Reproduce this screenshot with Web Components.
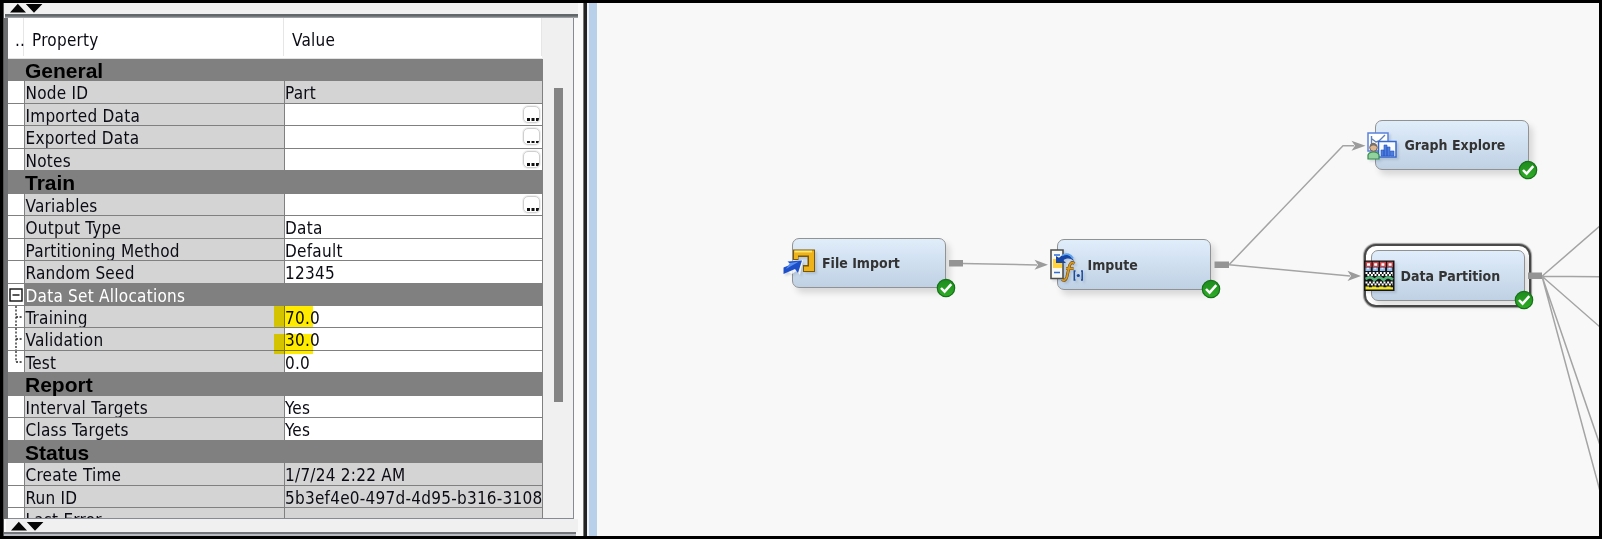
<!DOCTYPE html>
<html lang="en">
<head>
<meta charset="utf-8">
<title>Process flow</title>
<style>
html,body{margin:0;height:100%;overflow:hidden}
body{font-family:"DejaVu Sans Condensed","DejaVu Sans",sans-serif;font-stretch:condensed;font-size:17px;letter-spacing:.25px;color:#0b0b14}
</style>
</head>
<body>
<flow-app></flow-app>
<script>
const define = (name, html, setup) => customElements.define(name, class extends HTMLElement {
  connectedCallback() {
    if (this.shadowRoot) return;
    const root = this.attachShadow({mode: 'open'});
    root.innerHTML = typeof html === 'function' ? html(this) : html;
    if (setup) setup(this, root);
  }
});

define('split-bar', `<style>
:host{display:block;flex:none;background:#f0f0f0}
svg{display:block;margin-left:4px}
</style><svg width="60" height="11"><path d="M1 9.5 8.8.8 17 9.5ZM16.8 1H33.4L25 9.8Z" fill="#050505"/></svg>`);

define('prop-category', `<style>
:host{display:block;height:22.46px;box-sizing:border-box;background:#808080;overflow:hidden;padding-left:17px;color:#000;letter-spacing:0;
font:bold 21px/24px "Liberation Sans",Arial,sans-serif}
</style><slot></slot>`);

define('prop-row', el => {
  const tree = el.getAttribute('tree');
  const group = tree === 'group';
  let mark = '';
  if (group) mark = '<svg width="16" height="22"><rect x="2" y="5" width="12" height="12" fill="#fff" stroke="#111" stroke-width="1.4"/><path d="M4.5 11h7" stroke="#111" stroke-width="1.4"/></svg>';
  else if (tree) mark = `<svg width="16" height="22"><path d="M8 0V${tree === 'last' ? 11 : 22}M8 11h7" fill="none" stroke="#222" stroke-width="1.3" stroke-dasharray="2 1.6"/></svg>`;
  return `<style>
:host{display:grid;grid-template-columns:16px 260px 1fr;height:22.46px;box-sizing:border-box;border-bottom:1px solid #808080;line-height:24px;white-space:nowrap;overflow:hidden}
div{overflow:hidden;min-width:0;box-sizing:border-box}
.m{background:#fff}
.k{background:#d4d4d4;border-left:1px solid #808080;padding-left:.5px}
.v{background:#fff;border-left:1px solid #808080;display:flex;justify-content:space-between}
.ro{background:#d4d4d4}
.v.g{background:#808080;border-color:#808080}.k.g{background:#808080;color:#fff}
svg{display:block}
button{all:unset;flex:none;width:17px;height:17px;margin:2px 2px 0 0;box-sizing:border-box;border:1.5px solid #cfcfcf;border-radius:5px;background:#fff;box-shadow:0 0 0 1px #f0f0f0;overflow:hidden}
i{display:block;margin:10.5px 0 0 3px;width:2.7px;height:2.7px;background:#111;box-shadow:4.5px 0 #111,9px 0 #111}
</style><div class="m">${mark}</div><div class="k ${group ? 'g' : ''}"><slot></slot></div>
<div class="v ${group ? 'g' : ''} ${el.hasAttribute('ro') ? 'ro' : ''}"><slot name="value"></slot>${el.hasAttribute('more') ? '<span></span><button aria-label="More"><i></i></button>' : ''}</div>`;
});

define('prop-table', `<style>
:host{display:flex;flex:1;min-height:0;border-right:1px solid #858b92;border-bottom:1px solid #858b92;background:#f0f0f0;box-sizing:border-box}
.t{width:536px;height:100%;overflow:hidden}
.h{display:grid;grid-template-columns:16px 260px 1fr;width:534px;height:41px;background:#fff;border-bottom:1px solid #e2e2e2;box-sizing:border-box;padding:0 0 2px;line-height:45px}
.h span{border-right:1px solid #e6e6e6;padding-left:8px;white-space:nowrap;height:38px}
.h span:first-child{padding:0 0 0 7px}
.b{position:relative;width:535px;border-right:1px solid #808080;box-sizing:border-box}
u{position:absolute;left:266px;width:39px;background:#ffeb00;mix-blend-mode:multiply}
.s{flex:1;display:flex;justify-content:center;padding:70px 1px 0 0}
.s i{width:9px;height:314px;background:#848484}
</style><div class="t"><div class="h"><span>..</span><span>Property</span><span style="padding-left:8px">Value</span></div><div class="b">
<prop-category>General</prop-category>
<prop-row ro>Node ID<span slot="value">Part</span></prop-row>
<prop-row more>Imported Data</prop-row>
<prop-row more>Exported Data</prop-row>
<prop-row more>Notes</prop-row>
<prop-category>Train</prop-category>
<prop-row more>Variables</prop-row>
<prop-row>Output Type<span slot="value">Data</span></prop-row>
<prop-row>Partitioning Method<span slot="value">Default</span></prop-row>
<prop-row>Random Seed<span slot="value">12345</span></prop-row>
<prop-row tree="group">Data Set Allocations</prop-row>
<prop-row tree="mid">Training<span slot="value">70.0</span></prop-row>
<prop-row tree="mid">Validation<span slot="value">30.0</span></prop-row>
<prop-row tree="last">Test<span slot="value">0.0</span></prop-row>
<prop-category>Report</prop-category>
<prop-row>Interval Targets<span slot="value">Yes</span></prop-row>
<prop-row>Class Targets<span slot="value">Yes</span></prop-row>
<prop-category>Status</prop-category>
<prop-row ro>Create Time<span slot="value">1/7/24 2:22 AM</span></prop-row>
<prop-row ro>Run ID<span slot="value">5b3ef4e0-497d-4d95-b316-3108</span></prop-row>
<prop-row ro>Last Error</prop-row>
<u style="top:247px;height:21px"></u><u style="top:274.5px;height:20px"></u>
</div></div><div class="s"><i></i></div>`);

define('prop-panel', `<style>
:host{display:flex;flex-direction:column;width:580px;flex:none;background:#fafafa}
.top{width:573px}
.r1{height:4px;width:573px;margin-left:1px;background:linear-gradient(#62676a 0 2px,#777b7d 2px 3px,#9ba0a4 3px);flex:none}
.mid{display:flex;flex:1;min-height:0;width:570px;background:#6c6e70;padding-left:4px;box-sizing:border-box}
.bot{margin-left:2px;width:572px;height:13px;padding-top:2px;box-sizing:border-box}
.r2{height:4px;width:572px;background:linear-gradient(#727579 0 2px,#b8bcc2 2px);flex:none}
.edge{display:flex;flex-direction:column;flex:1;min-height:0;border-left:1px solid #555}
</style><div class="edge"><split-bar class="top" style="padding-left:1px"></split-bar><div class="r1"></div><div class="mid"><prop-table></prop-table></div><split-bar class="bot"></split-bar><div class="r2"></div></div>`);

const ICONS = {
import: `<path d="M10 3.500h22v22.500H20v-7h4.500V11h-9v3H10Z" fill="#7d5600"/><path d="M11 4.500h20V25H21v-4.500h5V9.500H15V13H11Z" fill="#eeb21a"/><path d="M11.500 5.500H29" stroke="#ffe87a" stroke-width="1.800"/><path d="M0 28V20.500L3 22 8 18 4 15 20 14 17 29 13.500 25 9 28 5 26Z" fill="#fff" opacity=".8"/><path d="M.5 28V21.500L8 18.500 4.500 15.500 19 14.500 15 27 12 23Z" fill="#1d4fc8"/><path d="M7 17 16 15.500 3 23Z" fill="#5d8ff0"/>`,
impute: `<path d="M2 3h12v28.500H2Z" fill="#f8f8f4" stroke="#4e4e4e" stroke-width="1.600"/><path d="M4 12h9v9H4Z" fill="#ffd23e"/><path d="M5 8h6M5 25.500h6" stroke="#2d6ed8" stroke-width="1.500"/><path d="M7 16V9l3 1.800C15 5 22 7 25 14 21 10.500 18 11 14 13l3 3Z" fill="#1646a8"/><path d="M13 8.500c5-3 9-1 11 3" stroke="#5ba2ef" stroke-width="1.800" fill="none"/><path d="M25.500 16.500c-3-2-4.500-.5-5.500 4l-2 9c-1 4-3 4.500-5 3M17 21.500h7.500" fill="none" stroke="#70480e" stroke-width="3"/><path d="M25.500 16.500c-3-2-4.500-.5-5.500 4l-2 9c-1 4-3 4.500-5 3M17 21.500h7.500" fill="none" stroke="#d99a20" stroke-width="1.800"/><path d="M26.500 24h-1.200v9h1.200M32 24h1.200v9H32" fill="none" stroke="#1d4b9c" stroke-width="1.500"/><circle cx="29.300" cy="28.500" r="1.600" fill="#1d4b9c"/>`,
explore: `<path d="M2 3h20v18H2Z" fill="#fff" stroke="#5a83db" stroke-width="1.500"/><path d="M5.500 6v9M6 9l4 3 3-1 6-6" stroke="#607fb5" stroke-width="1.400" fill="none"/><path d="M12.500 11.500H30V27H12.500Z" fill="#f8fbff" stroke="#3768ce" stroke-width="1.500"/><path d="M15 26v-6h3v6ZM18 26V15h3v11ZM21 26v-9h3v9ZM24.500 26v-5h3.500v5Z" fill="#4c7edf" stroke="#2553bd" stroke-width=".6"/><circle cx="7.500" cy="17.500" r="3.800" fill="#ddb58f" stroke="#7a6252"/><path d="M4 17c0-6 7-5 7 0-3-2-4-2-7 0" fill="#77716d"/><path d="M2 29v-4q1-3 5.500-3T13 25v4Z" fill="#91d29f" stroke="#348b4c" stroke-width="1.200"/>`,
partition: `<path d="M0 1.500h30.500v30.500H0Z" fill="#141414"/><g fill="none" stroke="#fff"><path d="M1.500 5.500H29" stroke="#c9474b" stroke-width="5.500" stroke-dasharray="6 1.200"/><path d="M3 5.500h26" stroke-width="2.400" stroke-dasharray="3 4.200"/><path d="M1.500 10.300H29" stroke="#8ebcef" stroke-width="3.600" stroke-dasharray="5.200 2"/><path d="M3 9.500h26" stroke="#dbe9fb" stroke-width="1.500" stroke-dasharray="2 5.200"/><path d="M1.500 14H29" stroke-width="1.800" stroke-dasharray="2 1.600"/><path d="M3.300 16H29" stroke-width="1.800" stroke-dasharray="2 1.600"/><path d="m1.500 20 3-1.500h3l3 2.500 3-2.500h3l3 2.500 3-2.500h3l3.500 2" stroke="#55b77b" stroke-width="2.600"/><path d="M1.500 23.500H29" stroke-width="1.800" stroke-dasharray="2 1.600"/><path d="M3.300 25.500H29" stroke-width="1.800" stroke-dasharray="2 1.600"/><path d="M1.500 29H29" stroke="#f3e72a" stroke-width="3"/><path d="M5 27.500h24" stroke="#141414" stroke-width="1.500" stroke-dasharray="3 4.200"/></g>`
};

define('flow-node', el => `<style>
:host{position:absolute;width:154px;height:50.500px;box-sizing:border-box;letter-spacing:0}
.box{width:100%;height:100%;box-sizing:border-box;border:1.500px solid #929292;border-radius:7px;background:linear-gradient(#e0edfb,#bfd1e4);box-shadow:4px 5px 6px rgba(0,0,0,.13);display:flex;align-items:center;padding:1px 0 0 ${el.getAttribute('pad')}px;white-space:nowrap;color:#333;font:bold 14px "DejaVu Sans Condensed","DejaVu Sans",sans-serif;font-stretch:condensed}
:host([selected])::before{content:"";position:absolute;inset:-6.500px;border:2.500px solid #4a4a4a;border-radius:12px;background:#fff;box-shadow:0 0 1px 1px #999}
:host([selected]) .box{position:relative}
.ic{position:absolute;left:${el.getAttribute('ix')}px;top:${el.getAttribute('iy')}px;filter:drop-shadow(2px 2px 1px rgba(60,80,110,.18))}
.ok{position:absolute;right:-9.500px;bottom:-9.500px}
</style><div class="box"><span><slot></slot></span></div>
<svg class="ic" width="36" height="36">${ICONS[el.getAttribute('icon')]}</svg>
<svg class="ok" width="20" height="20"><defs><linearGradient id="g" x2="0" y2="1"><stop stop-color="#1d8a1d"/><stop offset="1" stop-color="#2fae26"/></linearGradient></defs><circle cx="10" cy="10" r="8.700" fill="url(#g)" stroke="#17701a" stroke-width="1.200"/><path d="m5 10 3.600 3.700 6.700-7.500" fill="none" stroke="#fff" stroke-width="2.500"/></svg>`);

define('flow-canvas', `<style>
:host{display:block;position:relative;flex:1;background:#f8f8f8;overflow:hidden}
.e{position:absolute;inset:0}
</style><svg class="e" width="1002" height="533" viewBox="597 3 1002 533"><g fill="none" stroke="#a4a4a4" stroke-width="1.500">
<path d="M962 263.500 1037 265M1229 264.800 1343 145.800H1354M1229 264.800 1350 276M1542 276.200 1600 226M1542 276.200 1600 276.700M1542 276.200 1600 327M1542 276.200 1600 445M1542 276.200 1600 491"/></g>
<g fill="#9b9b9b"><path d="M1048 264.800 1034.500 259.800 1038 264.800 1034.500 269.800ZM1365.500 145.800 1351.500 140.800 1355 145.800 1351.500 150.800ZM1361 276 1347.500 270.800 1351 276 1347.500 281Z"/></g>
</svg>
<flow-node icon="import" pad="29" ix="-9.500" iy="8" style="left:195px;top:234.500px">File Import</flow-node>
<flow-node icon="impute" pad="29.500" ix="-8" iy="7.500" style="left:460px;top:236px">Impute</flow-node>
<flow-node icon="explore" pad="29" ix="-8.500" iy="10.500" style="left:777.500px;top:116.500px">Graph Explore</flow-node>
<flow-node icon="partition" pad="29" ix="-7" iy="8.500" selected style="left:773.500px;top:247.300px">Data Partition</flow-node>
<svg class="e" style="pointer-events:none" width="1002" height="533" viewBox="597 3 1002 533"><path d="M949 260h14v6.500h-14ZM1214.500 261.500h14.500v6.500h-14.500ZM1528 272.500h14v6.500h-14Z" fill="#949494"/></svg>`);

define('flow-app', `<style>
:host{display:flex;width:1602px;height:539px;box-sizing:border-box;border:3px solid #000;background:#000}
.d{flex:none;width:14px;background:linear-gradient(90deg,#777 0 1.500px,#222 1.500px 4px,#eef2f7 4px 6px,#b9d0ea 6px)}
</style><prop-panel></prop-panel><div class="d"></div><flow-canvas></flow-canvas>`);
</script>
</body>
</html>
